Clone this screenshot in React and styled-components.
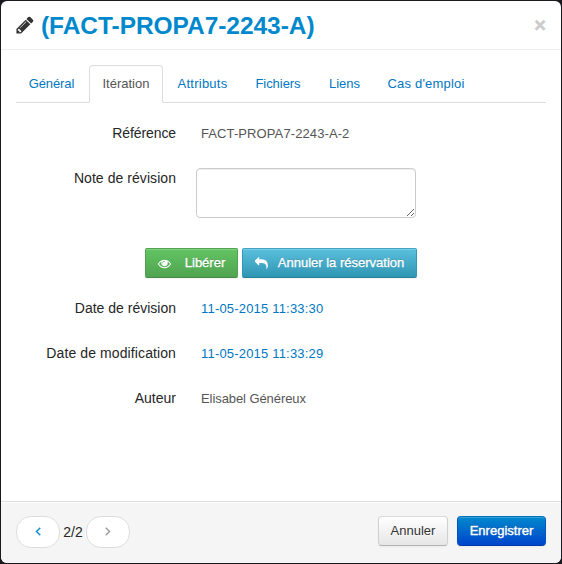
import React from "react";
import styled, { createGlobalStyle, css } from "styled-components";

const PageStyle = createGlobalStyle`
  *, *::before, *::after { box-sizing: border-box; }
  body {
    margin: 0;
    background: #1b191d;
    color: #262626;
    font: 14px/20px "Liberation Sans", Arial, sans-serif;
  }
`;

const Backdrop = styled.div`
  height: 564px;
  padding: 1px;
`;

const Modal = styled.section`
  height: 562px;
  display: flex;
  flex-direction: column;
  overflow: hidden;
  background: #fff;
  border-radius: 6px;
`;

const Header = styled.header`
  flex: none;
  height: 49px;
  padding: 0 15px 0 14px;
  display: flex;
  align-items: center;
  color: #333;
  border-bottom: 1px solid #eee;
`;

const Title = styled.h3`
  flex: 1;
  margin: 1px 0 0 6px;
  color: #0088cc;
  font-size: 24.5px;
  line-height: 30px;
  letter-spacing: ${(p) => p.$spacing}px;
`;

const CloseButton = styled.button`
  margin: 0;
  padding: 0 0 1px;
  border: 0;
  background: transparent;
  color: #ccc;
  font: bold 20px/20px "Liberation Sans", Arial, sans-serif;
  -webkit-text-stroke: 0.5px currentColor;
`;

const Icon = styled.svg`
  flex: none;
  display: block;
  width: ${(p) => p.$size}px;
  height: ${(p) => p.$size}px;
  fill: currentColor;
`;

const Body = styled.main`
  flex: 1;
  min-height: 0;
  padding: 15px 15px 0;
`;

const Tabs = styled.nav`
  display: flex;
  height: 38px;
  border-bottom: 1px solid #ddd;
`;

const Tab = styled.a`
  flex: none;
  width: ${(p) => p.$width}px;
  height: 38px;
  margin-right: 2px;
  padding-top: 8px;
  border: 1px solid transparent;
  border-radius: 4px 4px 0 0;
  color: #0077c2;
  font-size: 13px;
  letter-spacing: ${(p) => p.$spacing || 0}px;
  text-align: center;
  white-space: nowrap;
  ${(p) =>
    p.$active &&
    css`
      color: #555;
      background: #fff;
      border-color: #ddd #ddd #fff;
    `}
`;

const Form = styled.form`
  padding-top: 20px;
`;

const Row = styled.div`
  display: flex;
  height: ${(p) => p.$height || 45}px;
`;

const Label = styled.label`
  width: 160px;
  text-align: right;
  white-space: nowrap;
  letter-spacing: ${(p) => p.$spacing || 0}px;
`;

const Value = styled.span`
  margin-left: 25px;
  padding-top: 1px;
  color: ${(p) => (p.$link ? "#0077c2" : "#555")};
  font-size: 13px;
  letter-spacing: ${(p) => p.$spacing || 0}px;
  white-space: nowrap;
`;

const NoteField = styled.textarea`
  width: 220px;
  height: 50px;
  margin: 0 0 0 20px;
  padding: 4px 6px;
  border: 1px solid #ccc;
  border-radius: 4px;
  background: #fff;
  box-shadow: inset 0 1px 1px rgba(0, 0, 0, 0.075);
`;

const Actions = styled.div`
  display: flex;
  gap: 4px;
  height: 50px;
  padding-left: 129px;
`;

const buttonLooks = {
  success: css`
    color: #fff;
    background: linear-gradient(#62c462, #51a351);
    border-color: #51a351 #51a351 #458a45;
    text-shadow: 0 -1px 0 rgba(0, 0, 0, 0.25);
  `,
  info: css`
    color: #fff;
    background: linear-gradient(#5bc0de, #2f96b4);
    border-color: #3fa5c3 #3199b7 #27809a;
    text-shadow: 0 -1px 0 rgba(0, 0, 0, 0.25);
  `,
  primary: css`
    color: #fff;
    background: linear-gradient(#0088cc, #0044cc);
    border-color: #0071bb #0055c4 #003ba8;
    text-shadow: 0 -1px 0 rgba(0, 0, 0, 0.25);
  `,
  plain: css`
    color: #333;
    background: linear-gradient(#fff, #e6e6e6);
    border-color: #d9d9d9 #d0d0d0 #b3b3b3;
    text-shadow: 0 1px 1px rgba(255, 255, 255, 0.75);
  `,
};

const Button = styled.button`
  flex: none;
  display: flex;
  align-items: center;
  justify-content: center;
  width: ${(p) => p.$width}px;
  height: 30px;
  margin: 0;
  padding: 0;
  border: 1px solid;
  border-radius: ${(p) => p.$radius || 4}px;
  font: 13px/20px "Liberation Sans", Arial, sans-serif;
  letter-spacing: ${(p) => p.$spacing || 0}px;
  white-space: nowrap;
  box-shadow: inset 0 1px 0 rgba(255, 255, 255, 0.2), 0 1px 2px rgba(0, 0, 0, 0.05);
  -webkit-text-stroke: ${(p) => p.$stroke || 0}px currentColor;
  ${(p) => buttonLooks[p.$look]}

  svg { margin-right: ${(p) => p.$iconGap || 0}px; }
`;

const Footer = styled.footer`
  flex: none;
  height: 62px;
  padding: 14px 15px 0;
  display: flex;
  justify-content: space-between;
  align-items: flex-start;
  background: #f5f5f5;
  border-top: 1px solid #ddd;
  box-shadow: inset 0 1px 0 #fff;
`;

const Pager = styled.div`
  display: flex;
  align-items: center;
`;

const PageCount = styled.span`
  width: 26px;
  text-align: center;
`;

const PagerButton = styled.button`
  display: grid;
  place-items: center;
  width: 44px;
  height: 32px;
  margin: 0;
  padding: 0 1px 2px 0;
  border: 1px solid #ddd;
  border-radius: 15px;
  background: #fff;
  color: ${(p) => (p.disabled ? "#999" : "#0088cc")};
`;

const FooterActions = styled.div`
  display: flex;
  gap: 9px;
`;

const PencilIcon = () => (
  <Icon $size={20} viewBox="0 0 1792 1792">
    <path d="M491 1536l91-91-235-235-91 91v107h128v128h107zm523-928q0-22-22-22-10 0-17 7l-542 542q-7 7-7 17 0 22 22 22 10 0 17-7l542-542q7-7 7-17zm-54-192l416 416-832 832h-416v-416zm683 96q0 53-37 90l-166 166-416-416 166-165q36-38 90-38 53 0 91 38l235 234q37 39 37 91z" />
  </Icon>
);

const EyeIcon = () => (
  <Icon $size={13} viewBox="0 0 1792 1792">
    <path d="M1664 960q-152-236-381-353 61 104 61 225 0 185-131.5 316.5t-316.5 131.5-316.5-131.5-131.5-316.5q0-121 61-225-229 117-381 353 133 205 333.5 326.5t434.5 121.5 434.5-121.5 333.5-326.5zm-720-384q0-20-14-34t-34-14q-125 0-214.5 89.5t-89.5 214.5q0 20 14 34t34 14 34-14 14-34q0-86 61-147t147-61q20 0 34-14t14-34zm848 384q0 34-20 69-140 230-376.5 368.5t-499.5 138.5-499.5-139-376.5-368q-20-35-20-69t20-69q140-229 376.5-368t499.5-139 499.5 139 376.5 368q20 35 20 69z" />
  </Icon>
);

const ReplyIcon = () => (
  <Icon $size={13} viewBox="0 0 1792 1792">
    <path d="M1792 1120q0 166-127 451-3 7-10.5 24t-13.5 30-13 22q-12 17-28 17-15 0-23.5-10t-8.5-25q0-9 2.5-26.5t2.5-23.5q5-68 5-123 0-112-19.5-200.5t-54-153.5-89-112-115-77.5-144.5-47.5-164-26-184-7h-224v256q0 26-19 45t-45 19-45-19l-512-512q-19-19-19-45t19-45l512-512q19-19 45-19t45 19 19 45v256h224q713 0 875 403 53 134 53 333z" />
  </Icon>
);

const AngleIcon = ({ right }) => (
  <Icon $size={14} viewBox="0 0 1792 1792">
    <path
      transform={right ? "translate(1792 0) scale(-1 1)" : undefined}
      stroke="currentColor"
      strokeWidth="50"
      d="M1203 544q0 13-10 23l-393 393 393 393q10 10 10 23t-10 23l-50 50q-10 10-23 10t-23-10l-466-466q-10-10-10-23t10-23l466-466q10-10 23-10t23 10l50 50q10 10 10 23z"
    />
  </Icon>
);

const tabs = [
  { name: "Général", width: 71, spacing: -0.08 },
  { name: "Itération", width: 74, active: true },
  { name: "Attributs", width: 75, spacing: 0.25 },
  { name: "Fichiers", width: 72, spacing: -0.05 },
  { name: "Liens", width: 57 },
  { name: "Cas d'emploi", width: 102, spacing: 0.18 },
];

export default function App() {
  return (
    <>
      <PageStyle />
      <Backdrop>
        <Modal>
          <Header>
            <PencilIcon />
            <Title $spacing={-0.05}>(FACT-PROPA7-2243-A)</Title>
            <CloseButton aria-label="Fermer">×</CloseButton>
          </Header>
          <Body>
            <Tabs>
              {tabs.map((t) => (
                <Tab key={t.name} $width={t.width} $active={t.active} $spacing={t.spacing}>
                  {t.name}
                </Tab>
              ))}
            </Tabs>
            <Form onSubmit={(e) => e.preventDefault()}>
              <Row>
                <Label $spacing={-0.1}>Référence</Label>
                <Value $spacing={0.1}>FACT-PROPA7-2243-A-2</Value>
              </Row>
              <Row $height={80}>
                <Label htmlFor="note" $spacing={0.06}>Note de révision</Label>
                <NoteField id="note" />
              </Row>
              <Actions>
                <Button $look="success" $width={93} $radius={2} $iconGap={14} $stroke={0.3}>
                  <EyeIcon />
                  Libérer
                </Button>
                <Button $look="info" $width={175} $radius={2} $iconGap={10} $stroke={0.3}>
                  <ReplyIcon />
                  Annuler la réservation
                </Button>
              </Actions>
              <Row>
                <Label>Date de révision</Label>
                <Value $link $spacing={0.19}>11-05-2015 11:33:30</Value>
              </Row>
              <Row>
                <Label $spacing={0.1}>Date de modification</Label>
                <Value $link $spacing={0.19}>11-05-2015 11:33:29</Value>
              </Row>
              <Row>
                <Label>Auteur</Label>
                <Value $spacing={-0.08}>Elisabel Généreux</Value>
              </Row>
            </Form>
          </Body>
          <Footer>
            <Pager>
              <PagerButton aria-label="Précédent">
                <AngleIcon />
              </PagerButton>
              <PageCount>2/2</PageCount>
              <PagerButton aria-label="Suivant" disabled>
                <AngleIcon right />
              </PagerButton>
            </Pager>
            <FooterActions>
              <Button $look="plain" $width={70}>Annuler</Button>
              <Button $look="primary" $width={89} $stroke={0.4}>Enregistrer</Button>
            </FooterActions>
          </Footer>
        </Modal>
      </Backdrop>
    </>
  );
}
